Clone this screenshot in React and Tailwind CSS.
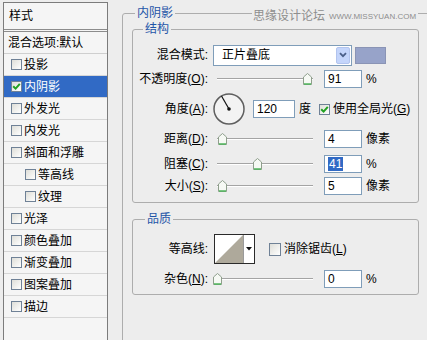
import React from 'react';

const styles = [
  { t: '投影' },
  { t: '内阴影', checked: true, active: true },
  { t: '外发光' },
  { t: '内发光' },
  { t: '斜面和浮雕' },
  { t: '等高线', sub: true },
  { t: '纹理', sub: true },
  { t: '光泽' },
  { t: '颜色叠加' },
  { t: '渐变叠加' },
  { t: '图案叠加' },
  { t: '描边' },
];

function Check({ checked, size = 'w-[11px] h-[11px]' }) {
  return (
    <span className={`${size} shrink-0 border border-[#6f8196] bg-gradient-to-br from-[#deded8] to-white flex items-center justify-center`}>
      {checked && (
        <svg width="9" height="9" viewBox="0 0 9 9">
          <path d="M1.2 4.2 L3.6 6.6 L7.8 1.8" fill="none" stroke="#21a121" strokeWidth="2" />
        </svg>
      )}
    </span>
  );
}

function Thumb() {
  return (
    <svg width="9" height="12" viewBox="0 0 9 12">
      <path d="M4.5 0.5 L8.5 4 L8.5 11.5 L0.5 11.5 L0.5 4 Z" fill="#f6f9f4" stroke="#8f9f8c" />
      <path d="M1 11 L8 11" stroke="#4fb45c" strokeWidth="1.5" />
    </svg>
  );
}

function Slider({ pos }) {
  return (
    <div className="relative ml-[9px] w-[96px] h-[14px] flex items-center">
      <div className="w-full h-[2px] border-t border-[#a4a4a4] border-b border-b-white" />
      <div className="absolute top-[1px]" style={{ left: pos - 4 }}>
        <Thumb />
      </div>
    </div>
  );
}

function Field({ value, w = 'w-[38px]', ml = 'ml-[11px]', selected }) {
  return (
    <div className={`${w} ${ml} h-[18px] border border-[#7f9db9] bg-white flex items-center pl-[3px] text-[12px] text-black`}>
      {selected ? <span className="bg-[#316ac5] text-white px-[1px] leading-[14px]">{value}</span> : value}
    </div>
  );
}

function Label({ children }) {
  return <div className="w-[75px] shrink-0 text-right text-[12px] text-black">{children}</div>;
}

function SliderRow({ label, h, pos, value, unit, selected }) {
  return (
    <div className={`flex items-center ${h}`}>
      <Label>{label}</Label>
      <Slider pos={pos} />
      <Field value={value} selected={selected} />
      <span className="ml-[4px] text-[12px]">{unit}</span>
    </div>
  );
}

function Legend({ children, ml }) {
  return <legend className={`${ml} px-[2px] text-[12px] leading-[16px] text-[#1f55a8]`}>{children}</legend>;
}

export default function App() {
  return (
    <div className="relative w-[427px] h-[340px] overflow-hidden bg-[#ededed] flex font-['Liberation_Sans','Noto_Sans_CJK_SC',sans-serif] text-black">
      {/* style list */}
      <div className="ml-[3px] mt-[2px] w-[105px] h-[360px] shrink-0 border border-[#7c7c7c] bg-[#f5f5f5] text-[12px]">
        <div className="h-[29px] border-b-[3px] border-double border-[#8c8c8c] flex items-center pl-[5px]">样式</div>
        <div className="h-[22px] border-b border-[#cfcfcf] flex items-center pl-[4px]">混合选项:默认</div>
        {styles.map((s) => (
          <div
            key={s.t}
            className={`h-[22px] border-b border-[#d6d6d6] flex items-center ${s.sub ? 'pl-[21px]' : 'pl-[7px]'} ${s.active ? 'bg-[#316ac5] text-white' : ''}`}
          >
            <Check checked={s.checked} />
            <span className="ml-[2px]">{s.t}</span>
          </div>
        ))}
      </div>

      {/* inner shadow options */}
      <fieldset className="ml-[14px] mt-[5px] w-[320px] h-[360px] shrink-0 border border-[#adadad] rounded-[3px] pl-[9px]">
        <Legend ml="ml-[3px]">内阴影</Legend>

        <fieldset className="w-[287px] border border-[#adadad] rounded-[3px] pt-[7px] pb-[5px]">
          <Legend ml="ml-[10px]">结构</Legend>

          <div className="flex items-center h-[22px]">
            <Label>混合模式:</Label>
            <div className="ml-[5px] w-[139px] h-[21px] border border-[#7f9db9] bg-white flex items-center">
              <span className="pl-[8px] flex-1 text-[12px]">正片叠底</span>
              <span className="w-[14px] h-[17px] mr-[1px] rounded-[2px] bg-[#c4d5fb] border border-[#b2c4ee] flex items-center justify-center">
                <svg width="8" height="6" viewBox="0 0 8 6">
                  <path d="M1 1.2 L4 4.2 L7 1.2" fill="none" stroke="#4a5f88" strokeWidth="1.8" />
                </svg>
              </span>
            </div>
            <div className="ml-[3px] w-[31px] h-[17px] bg-[#97a3c9] border border-[#8a94b5]" />
          </div>

          <SliderRow label={<>不透明度(<u>O</u>):</>} h="h-[26px]" pos={90} value="91" unit="%" />

          <div className="flex items-center h-[34px]">
            <Label>角度(<u>A</u>):</Label>
            <svg className="ml-[5px]" width="32" height="32" viewBox="0 0 32 32">
              <circle cx="16" cy="16" r="15" fill="#f3f3f3" stroke="#5e5e5e" strokeWidth="1.5" />
              <path d="M16 16 L8.5 3" stroke="#111" strokeWidth="1.2" />
              <circle cx="16" cy="16" r="1.8" fill="#111" />
            </svg>
            <Field value="120" w="w-[42px]" ml="ml-[8px]" />
            <span className="ml-[4px] text-[12px]">度</span>
            <span className="ml-[8px]"><Check checked /></span>
            <span className="ml-[3px] text-[12px]">使用全局光(<u>G</u>)</span>
          </div>

          <SliderRow label={<>距离(<u>D</u>):</>} h="h-[26px]" pos={5} value="4" unit="像素" />
          <SliderRow label={<>阻塞(<u>C</u>):</>} h="h-[23px]" pos={40} value="41" unit="%" selected />
          <SliderRow label={<>大小(<u>S</u>):</>} h="h-[22px]" pos={5} value="5" unit="像素" />
        </fieldset>

        <fieldset className="mt-[8px] w-[287px] border border-[#adadad] rounded-[3px] pt-[7px]">
          <Legend ml="ml-[12px]">品质</Legend>

          <div className="flex items-center h-[30px]">
            <Label>等高线:</Label>
            <div className="ml-[6px] w-[41px] h-[30px] border border-[#2a2a2a] bg-white flex">
              <svg width="28" height="28" viewBox="0 0 28 28">
                <path d="M0 28 L28 0 L28 28 Z" fill="#aea99b" />
              </svg>
              <div className="flex-1 border-l border-[#9a9a9a] flex items-center justify-center">
                <svg width="6" height="4" viewBox="0 0 6 4">
                  <path d="M0 0 L6 0 L3 3.5 Z" fill="#111" />
                </svg>
              </div>
            </div>
            <span className="ml-[14px]"><Check size="w-[12px] h-[13px]" /></span>
            <span className="ml-[3px] text-[12px]">消除锯齿(<u>L</u>)</span>
          </div>

          <SliderRow label={<>杂色(<u>N</u>):</>} h="h-[30px]" pos={0} value="0" unit="%" />
        </fieldset>
      </fieldset>

      {/* watermark */}
      <div className="absolute top-[8px] left-[252px] h-[16px] flex items-center whitespace-nowrap bg-[#ededed] pl-[1px] pr-[2px]">
        <span className="text-[12px] text-[#8e8e8e]">思缘设计论坛</span>
        <span className="ml-[4px] mt-[2px] text-[8px] text-[#8e8e8e]">WWW.MISSYUAN.COM</span>
      </div>
    </div>
  );
}
